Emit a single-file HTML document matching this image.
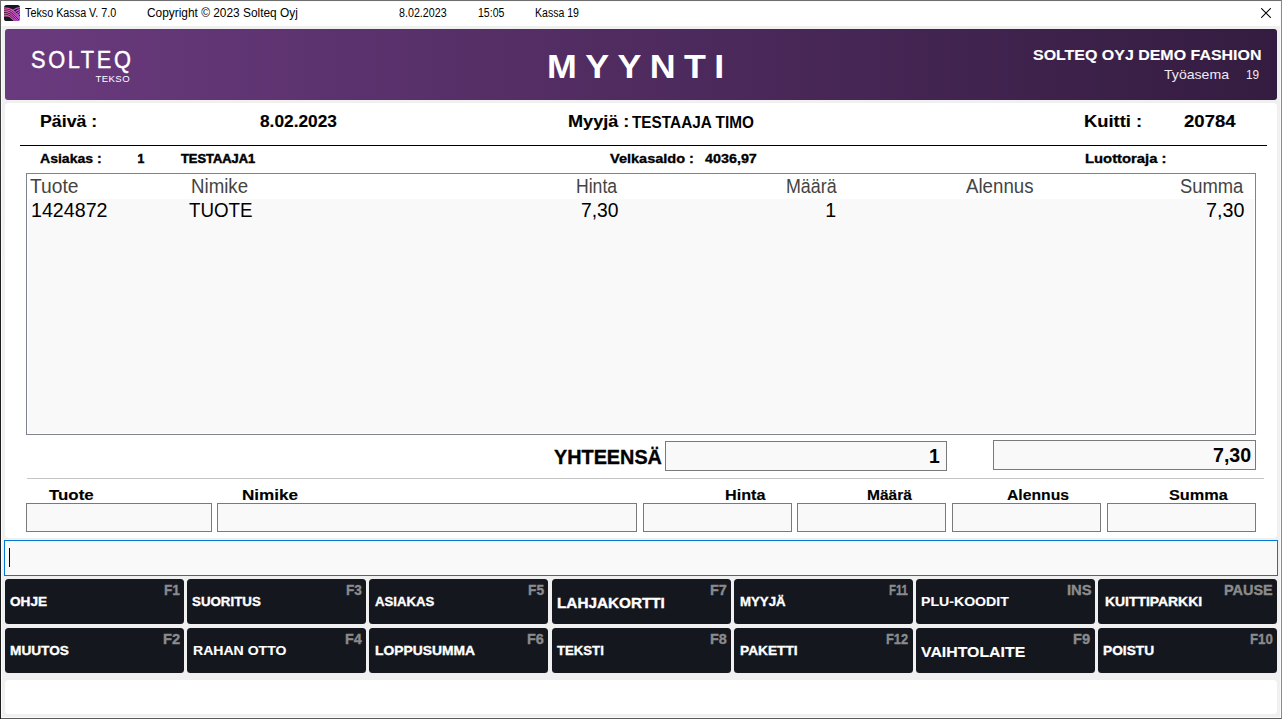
<!DOCTYPE html>
<html lang="fi">
<head>
<meta charset="utf-8">
<title>Tekso Kassa V. 7.0</title>
<style>
html,body{margin:0;padding:0;}
body{width:1282px;height:719px;position:relative;overflow:hidden;background:#f0f0f0;font-family:"Liberation Sans",sans-serif;color:#000;}
div,span{position:absolute;box-sizing:content-box;}
.t{white-space:nowrap;line-height:1;transform-origin:0 50%;display:block;}
#frame{left:0;top:0;width:1280px;height:717px;border-top:1px solid #6e6e6e;border-left:1px solid transparent;border-right:1px solid #8a8a8a;border-bottom:1px solid #5a5a5a;z-index:50;pointer-events:none;box-shadow:inset 0 0 0 1px #fbfbfb;}
#lborder{left:0;top:0;width:1px;height:719px;z-index:51;background:linear-gradient(180deg,#707070 0px,#5a5a5a 22px,#3a3a3a 110px,#1e1e1e 260px,#1e1e1e 100%);}
#titlebar{left:1px;top:1px;width:1280px;height:25px;background:#fff;}
#banner{left:5px;top:29px;width:1272px;height:71px;border-radius:3px;background:linear-gradient(90deg,#6a3a7e 0%,#341c40 100%);}
#panel{left:5px;top:103px;width:1272px;height:435px;border-radius:4px;background:#fff;}
#hr1{left:20px;top:145px;width:1247px;height:1px;background:#000;}
#table{left:26px;top:173px;width:1228px;height:260px;border:1px solid #7f838c;background:#fff;}
#rows{left:1px;top:25px;width:1226px;height:234px;background:#f9f9f9;}
.box{border:1px solid #7a7a7a;background:#f9f9f9;}
#hr2{left:27px;top:478px;width:1237px;height:1px;background:#c4c4c4;}
#entry{left:4px;top:540px;width:1272px;height:34px;border:1px solid #0078d7;background:#f9f9f9;}
#caret{left:4px;top:7px;width:1px;height:19px;background:#000;}
.btn{height:45px;border-radius:3.5px;background:#15171e;}
#status{left:5px;top:680px;width:1272px;height:34px;border-radius:4px;background:#fff;}
</style>
</head>
<body>
<div id="titlebar"></div>
<svg id="appicon" style="position:absolute;left:4px;top:5px" width="16" height="16" viewBox="0 0 16 16">
<defs><linearGradient id="ig" x1="0" x2="16" y1="0" y2="0" gradientUnits="userSpaceOnUse"><stop offset="0" stop-color="#ea53a6"/><stop offset="0.55" stop-color="#e05ad0"/><stop offset="1" stop-color="#d862f5"/></linearGradient>
<clipPath id="ic"><rect x="0" y="0" width="16" height="16" rx="2.6"/></clipPath></defs>
<rect x="0" y="0" width="16" height="16" rx="2.6" fill="#14171d"/>
<g clip-path="url(#ic)" fill="none" stroke="url(#ig)" stroke-width="1.15">
<path d="M0 2.8 C3 2.8 5.5 3.1 7.5 4.5 C10 6.2 13 9.2 16.5 13.2"/>
<path d="M0 4.6 C3 4.6 5 4.9 7 6.3 C9.5 8 12.5 11 16.5 15.2"/>
<path d="M0 6.4 C3 6.4 4.8 6.7 6.6 8.1 C9 9.9 12 12.8 15.5 17"/>
<path d="M0 8.2 C3 8.2 4.5 8.5 6.2 9.9 C8.5 11.7 11 14.2 13.5 17"/>
<path d="M0 10 C2.5 10 4.2 10.3 5.8 11.6 C7.8 13.2 9.6 15 11.5 17"/>
<path d="M16 2.6 C13 2.8 11.5 3.4 10 4.6 C9 5.4 8.2 5.6 7.5 4.6"/>
<path d="M16 4.6 C14 4.9 12.8 5.6 11.6 6.6"/>
<path d="M16 6.6 C14.8 6.9 14 7.6 13.2 8.4"/>
<path d="M16 8.6 C15.4 8.9 15 9.4 14.6 10"/>
</g>
<path d="M0 9.8 C2 9.6 4 10 5.6 11.2 L4.6 12 C3 11.5 1.5 11.6 0 12 Z" fill="#e857b4" opacity="0.7" clip-path="url(#ic)"/>
</svg>
<svg id="closex" style="position:absolute;left:1261px;top:8px" width="10" height="10" viewBox="0 0 10 10"><path d="M0.2 0.2 L9.8 9.8 M9.8 0.2 L0.2 9.8" stroke="#000" stroke-width="1.05" fill="none"/></svg>
<div id="banner"></div>
<div id="panel"></div>
<div id="hr1"></div>
<div id="table"><div id="rows"></div></div>
<div class="box" style="left:665px;top:441px;width:280px;height:28px"></div>
<div class="box" style="left:993px;top:440px;width:261px;height:28px"></div>
<div id="hr2"></div>
<div class="box" style="left:26px;top:503px;width:184px;height:27px"></div>
<div class="box" style="left:217px;top:503px;width:418px;height:27px"></div>
<div class="box" style="left:643px;top:503px;width:147px;height:27px"></div>
<div class="box" style="left:797px;top:503px;width:147px;height:27px"></div>
<div class="box" style="left:952px;top:503px;width:147px;height:27px"></div>
<div class="box" style="left:1107px;top:503px;width:147px;height:27px"></div>
<div id="entry"><div id="caret"></div></div>
<div class="btn" style="left:5px;top:579px;width:179px"></div>
<div class="btn" style="left:187px;top:579px;width:179px"></div>
<div class="btn" style="left:369px;top:579px;width:179px"></div>
<div class="btn" style="left:551.6px;top:579px;width:179.39999999999998px"></div>
<div class="btn" style="left:734px;top:579px;width:179px"></div>
<div class="btn" style="left:916px;top:579px;width:179px"></div>
<div class="btn" style="left:1098px;top:579px;width:179px"></div>
<div class="btn" style="left:5px;top:628px;width:179px"></div>
<div class="btn" style="left:187px;top:628px;width:179px"></div>
<div class="btn" style="left:369px;top:628px;width:179px"></div>
<div class="btn" style="left:551.6px;top:628px;width:179.39999999999998px"></div>
<div class="btn" style="left:734px;top:628px;width:179px"></div>
<div class="btn" style="left:916px;top:628px;width:179px"></div>
<div class="btn" style="left:1098px;top:628px;width:179px"></div>
<div id="status"></div>
<span class="t" style="top:6.60px;font-size:12px;left:25.00px;transform:scaleX(0.8985);">Tekso Kassa V. 7.0</span>
<span class="t" style="top:6.60px;font-size:12px;left:147.10px;transform:scaleX(0.9908);">Copyright © 2023 Solteq Oyj</span>
<span class="t" style="top:6.60px;font-size:12px;left:399.30px;transform:scaleX(0.8918);">8.02.2023</span>
<span class="t" style="top:6.60px;font-size:12px;left:477.90px;transform:scaleX(0.8796);">15:05</span>
<span class="t" style="top:6.60px;font-size:12px;left:534.60px;transform:scaleX(0.8777);">Kassa 19</span>
<span class="t" style="top:48.40px;font-size:24.2px;color:#fff;left:31.10px;letter-spacing:2.92px;transform:scaleX(0.9);-webkit-text-stroke:0.45px;">SOLTEQ</span>
<span class="t" style="top:74.20px;font-size:9.6px;color:#fff;left:95.40px;letter-spacing:0.44px;">TEKSO</span>
<span class="t" style="top:51.00px;font-size:32.6px;font-weight:700;color:#fff;left:547.00px;letter-spacing:7.61px;transform:scaleX(1.1);">MYYNTI</span>
<span class="t" style="top:47.90px;font-size:14px;font-weight:700;color:#fff;left:1033.00px;transform:scaleX(1.1397);-webkit-text-stroke:0.12px;">SOLTEQ OYJ DEMO FASHION</span>
<span class="t" style="top:69.00px;font-size:12.8px;color:#f0eaf3;left:1164.00px;transform:scaleX(1.1015);">Työasema</span>
<span class="t" style="top:69.00px;font-size:12.8px;color:#f0eaf3;left:1246.00px;transform:scaleX(0.9209);">19</span>
<span class="t" style="top:113.90px;font-size:15.6px;font-weight:700;left:39.56px;transform:scaleX(1.1376);-webkit-text-stroke:0.12px;">Päivä :</span>
<span class="t" style="top:113.90px;font-size:15.6px;font-weight:700;left:259.90px;transform:scaleX(1.1090);-webkit-text-stroke:0.12px;">8.02.2023</span>
<span class="t" style="top:114.10px;font-size:15.6px;font-weight:700;left:567.64px;transform:scaleX(1.1604);-webkit-text-stroke:0.12px;">Myyjä :</span>
<span class="t" style="top:115.10px;font-size:15.6px;font-weight:700;left:632.30px;transform:scaleX(0.9837);">TESTAAJA TIMO</span>
<span class="t" style="top:113.90px;font-size:15.6px;font-weight:700;left:1083.82px;transform:scaleX(1.1766);-webkit-text-stroke:0.12px;">Kuitti :</span>
<span class="t" style="top:113.90px;font-size:15.6px;font-weight:700;left:1183.80px;transform:scaleX(1.1902);-webkit-text-stroke:0.12px;">20784</span>
<span class="t" style="top:152.90px;font-size:12.2px;font-weight:700;left:39.80px;transform:scaleX(1.1513);-webkit-text-stroke:0.3px;">Asiakas :</span>
<span class="t" style="top:152.90px;font-size:12.2px;font-weight:700;left:137.60px;transform:scaleX(1.0000);-webkit-text-stroke:0.5px;">1</span>
<span class="t" style="top:152.90px;font-size:12.2px;font-weight:700;left:181.10px;transform:scaleX(1.0565);-webkit-text-stroke:0.5px;">TESTAAJA1</span>
<span class="t" style="top:152.90px;font-size:12.2px;font-weight:700;left:610.40px;transform:scaleX(1.1917);-webkit-text-stroke:0.3px;">Velkasaldo :</span>
<span class="t" style="top:152.90px;font-size:12.2px;font-weight:700;left:705.30px;transform:scaleX(1.1767);-webkit-text-stroke:0.3px;">4036,97</span>
<span class="t" style="top:152.90px;font-size:12.2px;font-weight:700;left:1084.60px;transform:scaleX(1.2158);-webkit-text-stroke:0.3px;">Luottoraja :</span>
<span class="t" style="top:176.70px;font-size:19.3px;color:#444;left:30.40px;transform:scaleX(0.9986);">Tuote</span>
<span class="t" style="top:176.70px;font-size:19.3px;color:#444;left:191.03px;transform:scaleX(0.9686);">Nimike</span>
<span class="t" style="top:176.70px;font-size:19.3px;color:#444;left:576.09px;transform:scaleX(0.9122);">Hinta</span>
<span class="t" style="top:176.70px;font-size:19.3px;color:#444;left:785.77px;transform:scaleX(0.9253);">Määrä</span>
<span class="t" style="top:176.70px;font-size:19.3px;color:#444;left:966.20px;transform:scaleX(0.9690);">Alennus</span>
<span class="t" style="top:176.70px;font-size:19.3px;color:#444;left:1179.70px;transform:scaleX(0.9534);">Summa</span>
<span class="t" style="top:200.80px;font-size:19.6px;left:30.70px;transform:scaleX(1.0029);">1424872</span>
<span class="t" style="top:200.80px;font-size:19.6px;left:188.80px;transform:scaleX(0.9559);">TUOTE</span>
<span class="t" style="top:200.80px;font-size:19.6px;left:581.01px;transform:scaleX(0.9856);">7,30</span>
<span class="t" style="top:200.80px;font-size:19.6px;left:825.30px;transform:scaleX(1.0000);">1</span>
<span class="t" style="top:200.80px;font-size:19.6px;left:1206.09px;transform:scaleX(1.0070);">7,30</span>
<span class="t" style="top:446.70px;font-size:20px;font-weight:700;left:554.00px;transform:scaleX(0.9911);-webkit-text-stroke:0.35px;">YHTEENSÄ</span>
<span class="t" style="top:446.90px;font-size:19.3px;font-weight:700;left:929.00px;transform:scaleX(1.0000);">1</span>
<span class="t" style="top:446.00px;font-size:19.3px;font-weight:700;left:1213.00px;transform:scaleX(1.0162);">7,30</span>
<span class="t" style="top:488.00px;font-size:14.3px;font-weight:700;left:49.20px;transform:scaleX(1.1795);-webkit-text-stroke:0.12px;">Tuote</span>
<span class="t" style="top:488.00px;font-size:14.3px;font-weight:700;left:241.90px;transform:scaleX(1.1975);-webkit-text-stroke:0.12px;">Nimike</span>
<span class="t" style="top:488.00px;font-size:14.3px;font-weight:700;left:724.80px;transform:scaleX(1.1334);-webkit-text-stroke:0.12px;">Hinta</span>
<span class="t" style="top:488.00px;font-size:14.3px;font-weight:700;left:867.10px;transform:scaleX(1.0876);-webkit-text-stroke:0.12px;">Määrä</span>
<span class="t" style="top:488.00px;font-size:14.3px;font-weight:700;left:1006.70px;transform:scaleX(1.1001);-webkit-text-stroke:0.12px;">Alennus</span>
<span class="t" style="top:488.00px;font-size:14.3px;font-weight:700;left:1169.40px;transform:scaleX(1.1387);-webkit-text-stroke:0.12px;">Summa</span>
<span class="t" style="top:595.10px;font-size:13px;font-weight:700;color:#fff;left:10.20px;transform:scaleX(1.0467);-webkit-text-stroke:0.35px;">OHJE</span>
<span class="t" style="top:595.10px;font-size:13px;font-weight:700;color:#fff;left:192.00px;transform:scaleX(1.0237);-webkit-text-stroke:0.35px;">SUORITUS</span>
<span class="t" style="top:595.10px;font-size:13px;font-weight:700;color:#fff;left:374.50px;transform:scaleX(1.0130);-webkit-text-stroke:0.35px;">ASIAKAS</span>
<span class="t" style="top:596.20px;font-size:14.3px;font-weight:700;color:#fff;left:557.40px;transform:scaleX(1.0694);-webkit-text-stroke:0.35px;">LAHJAKORTTI</span>
<span class="t" style="top:595.10px;font-size:13px;font-weight:700;color:#fff;left:739.60px;transform:scaleX(1.0176);-webkit-text-stroke:0.35px;">MYYJÄ</span>
<span class="t" style="top:595.10px;font-size:13px;font-weight:700;color:#fff;left:921.10px;transform:scaleX(1.0860);-webkit-text-stroke:0.12px;">PLU-KOODIT</span>
<span class="t" style="top:595.10px;font-size:13px;font-weight:700;color:#fff;left:1105.40px;transform:scaleX(1.0694);-webkit-text-stroke:0.35px;">KUITTIPARKKI</span>
<span class="t" style="top:644.10px;font-size:13px;font-weight:700;color:#fff;left:10.20px;transform:scaleX(1.0510);-webkit-text-stroke:0.35px;">MUUTOS</span>
<span class="t" style="top:644.10px;font-size:13px;font-weight:700;color:#fff;left:192.50px;transform:scaleX(1.0810);-webkit-text-stroke:0.12px;">RAHAN OTTO</span>
<span class="t" style="top:644.10px;font-size:13px;font-weight:700;color:#fff;left:374.50px;transform:scaleX(1.0646);-webkit-text-stroke:0.35px;">LOPPUSUMMA</span>
<span class="t" style="top:644.10px;font-size:13px;font-weight:700;color:#fff;left:557.40px;transform:scaleX(1.0129);-webkit-text-stroke:0.35px;">TEKSTI</span>
<span class="t" style="top:644.10px;font-size:13px;font-weight:700;color:#fff;left:739.60px;transform:scaleX(1.0549);-webkit-text-stroke:0.35px;">PAKETTI</span>
<span class="t" style="top:645.40px;font-size:14.3px;font-weight:700;color:#fff;left:921.10px;transform:scaleX(1.1086);-webkit-text-stroke:0.12px;">VAIHTOLAITE</span>
<span class="t" style="top:644.10px;font-size:13px;font-weight:700;color:#fff;left:1103.40px;transform:scaleX(1.0561);-webkit-text-stroke:0.35px;">POISTU</span>
<span class="t" style="top:583.00px;font-size:14.2px;font-weight:700;color:#8b8b8d;left:163.50px;transform:scaleX(0.9600);-webkit-text-stroke:0.35px;">F1</span>
<span class="t" style="top:583.00px;font-size:14.2px;font-weight:700;color:#8b8b8d;left:345.50px;transform:scaleX(0.9600);-webkit-text-stroke:0.35px;">F3</span>
<span class="t" style="top:583.00px;font-size:14.2px;font-weight:700;color:#8b8b8d;left:527.50px;transform:scaleX(0.9720);-webkit-text-stroke:0.35px;">F5</span>
<span class="t" style="top:583.00px;font-size:14.2px;font-weight:700;color:#8b8b8d;left:709.70px;transform:scaleX(1.0200);-webkit-text-stroke:0.35px;">F7</span>
<span class="t" style="top:583.00px;font-size:14.2px;font-weight:700;color:#8b8b8d;left:889.40px;transform:scaleX(0.7992);-webkit-text-stroke:0.35px;">F11</span>
<span class="t" style="top:583.00px;font-size:14.2px;font-weight:700;color:#8b8b8d;left:1066.60px;transform:scaleX(1.0437);-webkit-text-stroke:0.35px;">INS</span>
<span class="t" style="top:583.00px;font-size:14.2px;font-weight:700;color:#8b8b8d;left:1224.30px;transform:scaleX(1.0198);-webkit-text-stroke:0.35px;">PAUSE</span>
<span class="t" style="top:631.80px;font-size:14.2px;font-weight:700;color:#8b8b8d;left:162.50px;transform:scaleX(1.0380);-webkit-text-stroke:0.35px;">F2</span>
<span class="t" style="top:631.80px;font-size:14.2px;font-weight:700;color:#8b8b8d;left:344.80px;transform:scaleX(1.0140);-webkit-text-stroke:0.35px;">F4</span>
<span class="t" style="top:631.80px;font-size:14.2px;font-weight:700;color:#8b8b8d;left:527.00px;transform:scaleX(1.0200);-webkit-text-stroke:0.35px;">F6</span>
<span class="t" style="top:631.80px;font-size:14.2px;font-weight:700;color:#8b8b8d;left:709.70px;transform:scaleX(1.0200);-webkit-text-stroke:0.35px;">F8</span>
<span class="t" style="top:631.80px;font-size:14.2px;font-weight:700;color:#8b8b8d;left:886.40px;transform:scaleX(0.9040);-webkit-text-stroke:0.35px;">F12</span>
<span class="t" style="top:631.80px;font-size:14.2px;font-weight:700;color:#8b8b8d;left:1073.40px;transform:scaleX(1.0320);-webkit-text-stroke:0.35px;">F9</span>
<span class="t" style="top:631.80px;font-size:14.2px;font-weight:700;color:#8b8b8d;left:1249.70px;transform:scaleX(0.9325);-webkit-text-stroke:0.35px;">F10</span>
<div id="frame"></div>
<div id="lborder"></div>
</body>
</html>
